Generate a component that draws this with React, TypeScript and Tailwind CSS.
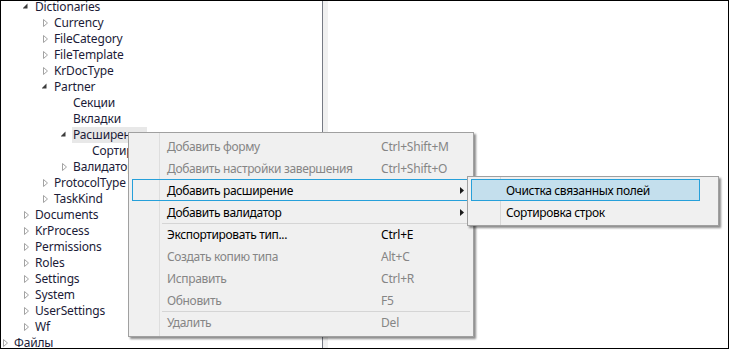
import React from 'react';

type Node = { lvl: number; t: string; kind: 'exp' | 'col' | 'none'; sel?: boolean };

const nodes: Node[] = [
  { lvl: 1, t: 'Dictionaries', kind: 'exp' },
  { lvl: 2, t: 'Currency', kind: 'col' },
  { lvl: 2, t: 'FileCategory', kind: 'col' },
  { lvl: 2, t: 'FileTemplate', kind: 'col' },
  { lvl: 2, t: 'KrDocType', kind: 'col' },
  { lvl: 2, t: 'Partner', kind: 'exp' },
  { lvl: 3, t: 'Секции', kind: 'none' },
  { lvl: 3, t: 'Вкладки', kind: 'none' },
  { lvl: 3, t: 'Расширения', kind: 'exp', sel: true },
  { lvl: 4, t: 'Сортировка строк', kind: 'none' },
  { lvl: 3, t: 'Валидаторы', kind: 'col' },
  { lvl: 2, t: 'ProtocolType', kind: 'col' },
  { lvl: 2, t: 'TaskKind', kind: 'col' },
  { lvl: 1, t: 'Documents', kind: 'col' },
  { lvl: 1, t: 'KrProcess', kind: 'col' },
  { lvl: 1, t: 'Permissions', kind: 'col' },
  { lvl: 1, t: 'Roles', kind: 'col' },
  { lvl: 1, t: 'Settings', kind: 'col' },
  { lvl: 1, t: 'System', kind: 'col' },
  { lvl: 1, t: 'UserSettings', kind: 'col' },
  { lvl: 1, t: 'Wf', kind: 'col' },
  { lvl: 0, t: 'Файлы', kind: 'col' },
];

// text starts at these x positions (tree panel starts at x=1)
const indent = ['pl-[2px]', 'pl-[22px]', 'pl-[41px]', 'pl-[60px]', 'pl-[79px]'];

function Glyph({ kind }: { kind: Node['kind'] }) {
  if (kind === 'col')
    return (
      <svg width="12" height="16" viewBox="0 0 12 16" className="shrink-0">
        <path d="M1.5 4.5 L5.5 8 L1.5 11.5 Z" fill="none" stroke="#a3a3a3" strokeWidth="1" />
      </svg>
    );
  if (kind === 'exp')
    return (
      <svg width="12" height="16" viewBox="0 0 12 16" className="shrink-0">
        <path d="M5 5.5 L5 10.5 L0 10.5 Z" fill="#3c3c3c" transform="translate(-0.5 -1)" />
      </svg>
    );
  return <span className="w-[12px] shrink-0" />;
}

type Item = { t?: string; key?: string; on?: boolean; sub?: boolean; hot?: boolean; sep?: boolean };

const items: Item[] = [
  { t: 'Добавить форму', key: 'Ctrl+Shift+M' },
  { t: 'Добавить настройки завершения', key: 'Ctrl+Shift+O' },
  { t: 'Добавить расширение', on: true, sub: true, hot: true },
  { t: 'Добавить валидатор', on: true, sub: true },
  { sep: true },
  { t: 'Экспортировать тип...', key: 'Ctrl+E', on: true },
  { t: 'Создать копию типа', key: 'Alt+C' },
  { t: 'Исправить', key: 'Ctrl+R' },
  { t: 'Обновить', key: 'F5' },
  { sep: true },
  { t: 'Удалить', key: 'Del' },
];

export default function App() {
  return (
    <div
      className="w-[729px] h-[349px] border border-black bg-white flex relative overflow-hidden text-[12px] text-[#1b1b38]"
      style={{ fontFamily: '"Noto Sans", "Open Sans", sans-serif' }}
    >
      {/* Tree */}
      <div className="w-[321px] shrink-0 overflow-hidden tracking-[-0.15px]">
        <div className="-mt-[2px]">
          {nodes.map((n, i) => (
            <div key={i} className={`h-4 flex items-center leading-4 whitespace-nowrap ${n.lvl === 0 ? 'pl-[1px]' : indent[n.lvl]}`}>
              <Glyph kind={n.kind} />
              <span className={n.sel ? 'bg-[#e8e8e8] px-[1px] -ml-[1px] pr-[2px]' : ''}>{n.t}</span>
            </div>
          ))}
        </div>
      </div>

      {/* Splitter */}
      <div className="w-px shrink-0 bg-[#767a84]" />
      <div className="w-[5px] shrink-0 bg-[#f0f0f0]" />
      <div className="flex-1 bg-white" />

      {/* Context menu */}
      <div className="absolute left-[127px] top-[131px] w-[346px] h-[205px] bg-[#f0f0f0] border border-[#a0a0a0] shadow-[2px_2px_2px_rgba(0,0,0,0.45)] px-[3px] pt-[2px] text-black tracking-[-0.35px]">
        <div className="absolute left-[30px] top-0 bottom-0 w-px bg-[#dedede]" />
        {items.map((it, i) =>
          it.sep ? (
            <div key={i} className="h-px -mb-px ml-[30px] bg-[#d5d5d5] relative" />
          ) : (
            <div
              key={i}
              className={`h-[22px] flex items-center pt-[2px] relative border whitespace-nowrap ${it.hot ? 'border-[#26a0da]' : 'border-transparent'} ${it.on ? 'text-black' : 'text-[#858585]'}`}
            >
              <span className="pl-[34px] w-[248px] shrink-0">{it.t}</span>
              <span className="tracking-[-0.2px]">{it.key}</span>
              {it.sub && (
                <svg width="4" height="7" viewBox="0 0 4 7" className="absolute right-[5px] top-[7px]">
                  <path d="M0 0 L4 3.5 L0 7 Z" fill="#1a1a1a" />
                </svg>
              )}
            </div>
          )
        )}
      </div>

      {/* Submenu */}
      <div className="absolute left-[466px] top-[175px] w-[252px] h-[50px] bg-[#f0f0f0] border border-[#a0a0a0] shadow-[2px_2px_2px_rgba(0,0,0,0.45)] pl-[3px] pr-[18px] pt-[2px] text-black tracking-[-0.35px]">
        <div className="absolute left-[32px] top-0 bottom-0 w-px bg-[#d8d8d8]" />
        <div className="h-[22px] flex items-center pt-[2px] border border-[#26a0da] bg-[#c4dfed] pl-[34px] whitespace-nowrap relative">
          Очистка связанных полей
        </div>
        <div className="h-[22px] flex items-center pt-[2px] border border-transparent pl-[34px] whitespace-nowrap">
          Сортировка строк
        </div>
      </div>
    </div>
  );
}
